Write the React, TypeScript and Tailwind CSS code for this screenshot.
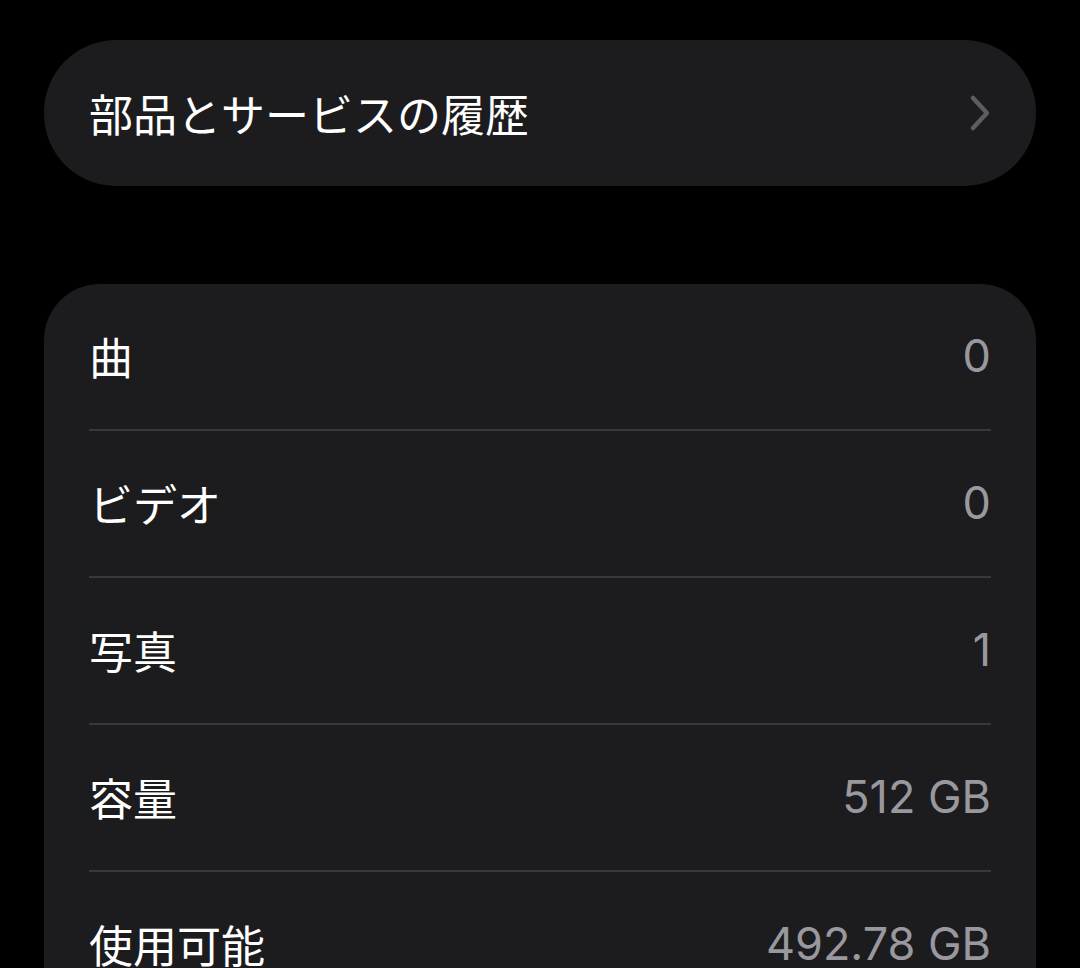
const ROWS = [
  { label: "曲", value: "0" },
  { label: "ビデオ", value: "0" },
  { label: "写真", value: "1" },
  { label: "容量", value: "512 GB" },
  { label: "使用可能", value: "492.78 GB" },
];

const JP = { fontFamily: '"Noto Sans CJK JP", "Noto Sans", sans-serif' };
const NUM = { fontFamily: 'Inter, "Noto Sans", sans-serif' };

function Chevron() {
  return (
    <svg width="24" height="38" viewBox="0 0 24 38" fill="none">
      <path d="M5 4 L19 19 L5 34" stroke="#5c5c61" strokeWidth="4.5" strokeLinecap="round" strokeLinejoin="round" />
    </svg>
  );
}

export default function App() {
  return (
    <div className="h-[968px] w-[1080px] overflow-hidden bg-black px-[44px] pt-[40px]">
      {/* Parts & service history */}
      <div className="flex h-[146px] items-center justify-between rounded-[72px] bg-[#1c1c1e] pl-[45px] pr-[44px]">
        <span className="text-[44px] leading-none text-white" style={JP}>部品とサービスの履歴</span>
        <Chevron />
      </div>

      {/* Counts */}
      <div className="mt-[98px] rounded-[56px] bg-[#1c1c1e] px-[45px] pb-[60px]">
        {ROWS.map((row, i) => (
          <div key={row.label}>
            {i > 0 && <div className="h-[2px] bg-[#38383a]" />}
            <div className="flex h-[145px] items-center justify-between pb-[2px]">
              <span className="text-[44px] leading-none text-white" style={JP}>{row.label}</span>
              <span className="text-[45px] leading-none text-[#98989e]" style={NUM}>{row.value}</span>
            </div>
          </div>
        ))}
      </div>
    </div>
  );
}
